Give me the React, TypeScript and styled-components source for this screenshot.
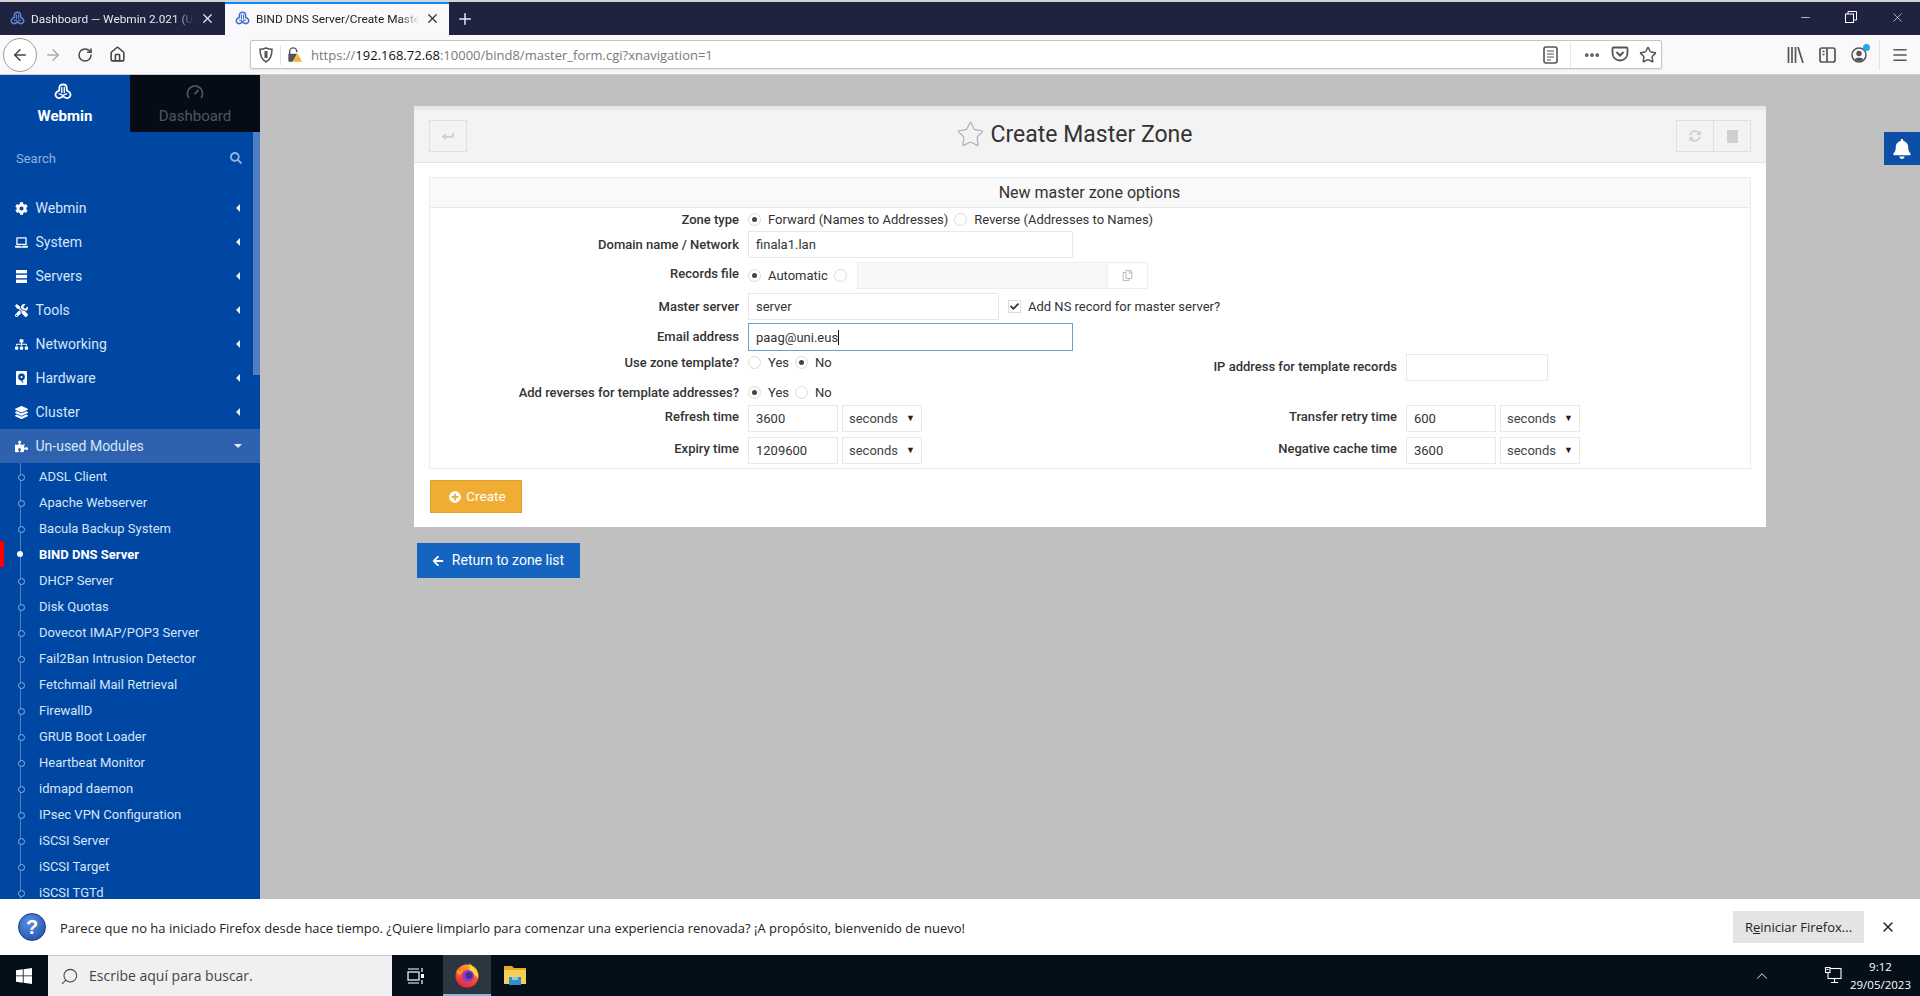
import styled, { createGlobalStyle } from "styled-components";
import {
  ArrowLeft,
  ArrowRight,
  RotateCw,
  Home,
  Plus,
  X,
  Minus,
  Star,
  MoreHorizontal,
  Menu,
  ChevronUp,
  Search,
  Gauge,
} from "lucide-react";
import {
  FaCog,
  FaLaptop,
  FaTools,
  FaSitemap,
  FaLayerGroup,
  FaPuzzlePiece,
  FaSearch,
  FaBell,
  FaPlusCircle,
  FaArrowLeft,
  FaCheck,
  FaSyncAlt,
  FaLevelDownAlt,
  FaRegCopy,
} from "react-icons/fa";

const GlobalStyle = createGlobalStyle`
  html, body {
    margin: 0;
    padding: 0;
    height: 100%;
    overflow: hidden;
  }
  body {
    font-family: Roboto, "Liberation Sans", sans-serif;
    font-size: 13px;
    color: #333;
  }
  * {
    box-sizing: border-box;
  }
`;

function ServerIcon() {
  return (
    <svg width="11" height="13" viewBox="0 0 11 13" fill="currentColor">
      <rect x="0" y="0" width="11" height="3.400" />
      <rect x="0" y="4.800" width="11" height="3.400" />
      <rect x="0" y="9.600" width="11" height="3.400" />
    </svg>
  );
}

function DriveIcon() {
  return (
    <svg width="11" height="14" viewBox="0 0 11 14">
      <rect x="0" y="0" width="11" height="14" rx="1" fill="currentColor" />
      <circle cx="5.500" cy="6" r="3.400" fill="#0047a3" />
      <circle cx="5.500" cy="6" r="1.100" fill="currentColor" />
      <path d="M5 8.500l2 3" stroke="#0047a3" strokeWidth="1.200" />
    </svg>
  );
}

const menu = [
  { label: "Webmin", icon: <FaCog /> },
  { label: "System", icon: <FaLaptop /> },
  { label: "Servers", icon: <ServerIcon /> },
  { label: "Tools", icon: <FaTools /> },
  { label: "Networking", icon: <FaSitemap /> },
  { label: "Hardware", icon: <DriveIcon /> },
  { label: "Cluster", icon: <FaLayerGroup /> },
];

const modules = [
  "ADSL Client",
  "Apache Webserver",
  "Bacula Backup System",
  "BIND DNS Server",
  "DHCP Server",
  "Disk Quotas",
  "Dovecot IMAP/POP3 Server",
  "Fail2Ban Intrusion Detector",
  "Fetchmail Mail Retrieval",
  "FirewallD",
  "GRUB Boot Loader",
  "Heartbeat Monitor",
  "idmapd daemon",
  "IPsec VPN Configuration",
  "iSCSI Server",
  "iSCSI Target",
  "iSCSI TGTd",
];

function WebminLogo({ size, color }: { size: number; color: string }) {
  return (
    <svg width={size} height={size} viewBox="0 0 24 24" fill="none" stroke={color} strokeWidth="2.400" strokeLinecap="round" strokeLinejoin="round">
      <path d="M7 10V6.500C7 3.800 9 2 12 2s5 1.800 5 4.500V10l2.800 1.800c2.400 1.600 2.800 4.400 1.400 6.300-1.500 2-4.200 2.500-6.200 1.200L12 18l-3 1.300c-2 1.300-4.700.8-6.200-1.200-1.400-1.900-1-4.700 1.400-6.300z" />
      <path d="M10.300 6v6.500M13.700 6v6.500M7 14.500c2 0 3.600.8 5 2.500 1.400-1.700 3-2.500 5-2.500" strokeWidth="1.800" />
    </svg>
  );
}

function FirefoxLogo() {
  return (
    <svg width="26" height="27" viewBox="0 0 26 27">
      <defs>
        <linearGradient id="ffOuter" x1="0.7" y1="0" x2="0.3" y2="1">
          <stop offset="0" stopColor="#ffb52e" />
          <stop offset="0.45" stopColor="#ff5a2b" />
          <stop offset="1" stopColor="#e3204f" />
        </linearGradient>
      </defs>
      <circle cx="13" cy="15" r="11.500" fill="url(#ffOuter)" />
      <path d="M15 1c.8 3 5 4.500 7.500 8.500 1.500 2.500 2 5 1.500 7.500L15 9c1-2.500 1-5.500 0-8z" fill="#ffd23a" />
      <circle cx="14" cy="15" r="6" fill="#8a3fbf" />
      <circle cx="15" cy="14.500" r="3.400" fill="#4a2a9c" />
      <path d="M3 8c1 1.500 2 2.200 3 2 1.200-1.500 2.500-2 3.500-1.500-.5 2-2 4.500-4 5.500-2 .5-3-3-2.500-6z" fill="#ff9a2b" />
    </svg>
  );
}

function FolderLogo() {
  return (
    <svg width="22" height="21" viewBox="0 0 22 21">
      <path d="M0 1h8l2 2h12v3H0z" fill="#e8a820" />
      <rect x="0" y="5" width="22" height="14" fill="#f7cf52" />
      <rect x="5" y="12" width="12" height="8" fill="#2f8fc9" />
      <rect x="8" y="12" width="6" height="3" fill="#8cc6ea" />
    </svg>
  );
}

function WindowsLogo() {
  return (
    <svg width="16" height="16" viewBox="0 0 16 16" fill="#fff">
      <path d="M0 2.300 6.800 1.300V7.500H0zM7.600 1.200 16 0V7.500H7.600zM0 8.300H6.800V14.700L0 13.700zM7.600 8.300H16V16L7.600 14.800z" />
    </svg>
  );
}

function Radio({ on }: { on?: boolean }) {
  return <RadioCircle>{on && <RadioDot />}</RadioCircle>;
}

function SelectBox({ width }: { width: number }) {
  return (
    <SelectField style={{ width }}>
      seconds
      <SelectArrow>▼</SelectArrow>
    </SelectField>
  );
}

export default function App() {
  return (
    <Screen>
      <GlobalStyle />
      <TabBar>
        <Tab>
          <WebminLogo size={15} color="#5c86d8" />
          <TabTitle>Dashboard — Webmin 2.021 (U</TabTitle>
          <X size={15} color="#e6e7ee" />
        </Tab>
        <ActiveTab>
          <WebminLogo size={15} color="#3f6fc4" />
          <TabTitle>BIND DNS Server/Create Maste</TabTitle>
          <X size={15} color="#333" />
        </ActiveTab>
        <NewTab>
          <Plus size={18} color="#e6e7ee" />
        </NewTab>
        <WindowControls>
          <WindowButton><Minus size={13} strokeWidth={1.2} /></WindowButton>
          <WindowButton>
            <svg width="12" height="12" viewBox="0 0 12 12" fill="none" stroke="#fff" strokeWidth="1">
              <rect x="0.500" y="3" width="8" height="8.500" />
              <path d="M3 3V.5h8.500V9H8.500" />
            </svg>
          </WindowButton>
          <WindowButton><X size={15} strokeWidth={1} /></WindowButton>
        </WindowControls>
      </TabBar>

      <NavBar>
        <BackCircle><ArrowLeft size={18} strokeWidth={2} /></BackCircle>
        <ToolButton $faded><ArrowRight size={18} strokeWidth={1.8} /></ToolButton>
        <ToolButton><RotateCw size={16} strokeWidth={2.2} /></ToolButton>
        <ToolButton><Home size={17} strokeWidth={2.2} /></ToolButton>
        <UrlBar>
          <UrlIcon>
            <svg width="14" height="16" viewBox="0 0 14 16" fill="none" stroke="#555" strokeWidth="1.500">
              <path d="M7 1c2 1 4 1.300 6 1.300 0 6-1 10-6 12.700C2 12.300 1 8.300 1 2.300 3 2.300 5 2 7 1z" />
              <path d="M7 4v7" strokeWidth="3" />
            </svg>
          </UrlIcon>
          <UrlDivider />
          <UrlIcon>
            <svg width="18" height="18" viewBox="0 0 18 18">
              <path d="M3 8V5a4 4 0 0 1 8 0v1" fill="none" stroke="#555" strokeWidth="1.600" />
              <rect x="1.500" y="7.500" width="10" height="9" rx="1" fill="#555" />
              <path d="M12 7l5.500 10h-11z" fill="#f5b427" stroke="#fff" strokeWidth="0.600" />
            </svg>
          </UrlIcon>
          <UrlText>
            https://<UrlHost>192.168.72.68</UrlHost>:10000/bind8/master_form.cgi?xnavigation=1
          </UrlText>
          <UrlActions>
            <svg width="15" height="18" viewBox="0 0 15 18" fill="none" stroke="#555" strokeWidth="1.600">
              <rect x="1" y="1" width="13" height="16" rx="2" />
              <path d="M4 5h7M4 8h7M4 11h7M4 14h4" strokeWidth="1.200" />
            </svg>
            <UrlActionDivider />
            <MoreHorizontal size={18} color="#555" strokeWidth={3} />
            <svg width="18" height="17" viewBox="0 0 18 17" fill="none" stroke="#555" strokeWidth="1.800">
              <path d="M2.500 1.500h13c.6 0 1 .4 1 1V7a7.500 7.500 0 0 1-15 0V2.500c0-.6.4-1 1-1z" />
              <path d="M5.500 6 9 9.500 12.500 6" strokeWidth="2" />
            </svg>
            <Star size={18} color="#555" strokeWidth={2} />
          </UrlActions>
        </UrlBar>
        <RightTools>
          <ToolButton>
            <svg width="17" height="16" viewBox="0 0 17 16" fill="none" stroke="#555" strokeWidth="1.700">
              <path d="M1.500 0v16M5 0v16M8.500 0v16M11 0l5 16" />
            </svg>
          </ToolButton>
          <ToolButton>
            <svg width="17" height="16" viewBox="0 0 17 16" fill="none" stroke="#555" strokeWidth="1.700">
              <rect x="1" y="1" width="15" height="14" rx="2" />
              <path d="M8 1v14M3.500 4.500h2M3.500 7.500h2" />
            </svg>
          </ToolButton>
          <ToolButton>
            <AccountIcon>
              <svg width="16" height="16" viewBox="0 0 16 16">
                <circle cx="8" cy="8" r="7" fill="none" stroke="#555" strokeWidth="1.500" />
                <circle cx="8" cy="6.500" r="2.700" fill="#555" />
                <path d="M3.500 12.500c1-2.500 8-2.500 9 0-2 2-7 2-9 0z" fill="#555" />
              </svg>
              <AccountDot />
            </AccountIcon>
          </ToolButton>
          <ToolDivider />
          <ToolButton><Menu size={18} color="#555" strokeWidth={2.2} /></ToolButton>
        </RightTools>
      </NavBar>

      <Body>
        <Sidebar>
          <SideTabs>
            <SideTab $active>
              <SideLogo>
                <WebminLogo size={18} color="#fff" />
              </SideLogo>
              <span>Webmin</span>
            </SideTab>
            <SideTab>
              <Gauge size={18} strokeWidth={2.4} />
              <span>Dashboard</span>
            </SideTab>
          </SideTabs>
          <SideScroll />
          <SearchRow>
            <span>Search</span>
            <FaSearch size={12} />
          </SearchRow>
          <MenuList>
            {menu.map((item) => (
              <MenuRow key={item.label}>
                <MenuIcon>{item.icon}</MenuIcon>
                <MenuLabel>{item.label}</MenuLabel>
                <ArrowLeftShape />
              </MenuRow>
            ))}
            <MenuRow $open>
              <MenuIcon><FaPuzzlePiece /></MenuIcon>
              <MenuLabel>Un-used Modules</MenuLabel>
              <ArrowDownShape />
            </MenuRow>
          </MenuList>
          <ModuleList>
            {modules.map((name) => (
              <ModuleRow key={name} $active={name === "BIND DNS Server"}>
                {name}
              </ModuleRow>
            ))}
          </ModuleList>
        </Sidebar>

        <Main>
          <BellTab>
            <FaBell size={20} />
          </BellTab>
          <Card>
            <CardHeader>
              <HeaderButton>
                <FaLevelDownAlt size={12} style={{ transform: "rotate(90deg)" }} />
              </HeaderButton>
              <CardTitle>
                <Star size={29} strokeWidth={1} color="#b0b0b0" />
                <span>Create Master Zone</span>
              </CardTitle>
              <HeaderGroup>
                <HeaderButton><FaSyncAlt size={12} /></HeaderButton>
                <HeaderButton $joined><StopSquare /></HeaderButton>
              </HeaderGroup>
            </CardHeader>
            <CardBody>
              <FormTable>
                <FormTitle>New master zone options</FormTitle>
                <Row $height={23}>
                  <Label>Zone type</Label>
                  <Options $span>
                    <Radio on />
                    <OptionText>Forward (Names to Addresses)</OptionText>
                    <Radio />
                    <OptionText>Reverse (Addresses to Names)</OptionText>
                  </Options>
                </Row>
                <Row $height={27}>
                  <Label $lift={1}>Domain name / Network</Label>
                  <Field $width={325}>finala1.lan</Field>
                </Row>
                <Row $height={27} $top={4}>
                  <Label $lift={5}>Records file</Label>
                  <Options $span>
                    <Radio on />
                    <OptionText>Automatic</OptionText>
                    <Radio />
                    <FileField>
                      <FileButton><FaRegCopy size={11} /></FileButton>
                    </FileField>
                  </Options>
                </Row>
                <Row $height={27} $top={4}>
                  <Label $lift={1}>Master server</Label>
                  <Options $span>
                    <Field $width={251}>server</Field>
                    <CheckBox><FaCheck size={9} /></CheckBox>
                    <OptionText>Add NS record for master server?</OptionText>
                  </Options>
                </Row>
                <Row $height={28} $top={3}>
                  <Label $lift={1}>Email address</Label>
                  <FocusField>
                    paag@uni.eus<Caret />
                  </FocusField>
                </Row>
                <Row $height={28} $top={2}>
                  <Label $lift={10}>Use zone template?</Label>
                  <Options $lift={10}>
                    <Radio />
                    <OptionText>Yes</OptionText>
                    <Radio on />
                    <OptionText>No</OptionText>
                  </Options>
                  <Label $lift={2}>IP address for template records</Label>
                  <Field $width={142} />
                </Row>
                <Row $height={23}>
                  <Label>Add reverses for template addresses?</Label>
                  <Options>
                    <Radio on />
                    <OptionText>Yes</OptionText>
                    <Radio />
                    <OptionText>No</OptionText>
                  </Options>
                </Row>
                <Row $height={28}>
                  <Label $lift={4}>Refresh time</Label>
                  <Options>
                    <Field $width={90}>3600</Field>
                    <SelectBox width={80} />
                  </Options>
                  <Label $lift={4}>Transfer retry time</Label>
                  <Options>
                    <Field $width={90}>600</Field>
                    <SelectBox width={80} />
                  </Options>
                </Row>
                <Row $height={28} $top={4}>
                  <Label $lift={4}>Expiry time</Label>
                  <Options>
                    <Field $width={90}>1209600</Field>
                    <SelectBox width={80} />
                  </Options>
                  <Label $lift={4}>Negative cache time</Label>
                  <Options>
                    <Field $width={90}>3600</Field>
                    <SelectBox width={80} />
                  </Options>
                </Row>
              </FormTable>
              <CreateButton>
                <FaPlusCircle size={12} />
                <CreateLabel>Create</CreateLabel>
              </CreateButton>
            </CardBody>
          </Card>
          <ReturnButton>
            <FaArrowLeft size={12} />
            <ReturnLabel>Return to zone list</ReturnLabel>
          </ReturnButton>
        </Main>
      </Body>

      <Notice>
        <NoticeIcon>?</NoticeIcon>
        <NoticeText>
          Parece que no ha iniciado Firefox desde hace tiempo. ¿Quiere limpiarlo para comenzar una experiencia renovada? ¡A propósito, bienvenido de nuevo!
        </NoticeText>
        <NoticeButton>
          R<u>e</u>iniciar Firefox...
        </NoticeButton>
        <NoticeClose><X size={16} strokeWidth={2.2} /></NoticeClose>
      </Notice>

      <Taskbar>
        <StartButton><WindowsLogo /></StartButton>
        <TaskSearch>
          <Search size={19} strokeWidth={1.3} style={{ transform: "scaleX(-1)" }} />
          <TaskSearchText>Escribe aquí para buscar.</TaskSearchText>
        </TaskSearch>
        <TaskIcon>
          <svg width="18" height="18" viewBox="0 0 18 18" fill="none" stroke="#fff" strokeWidth="1.200">
            <rect x="1" y="5" width="11" height="8" />
            <path d="M1 2h11M1 16h11M15 1v4M15 13v4" />
            <rect x="14" y="7" width="3" height="4" fill="#fff" stroke="none" />
          </svg>
        </TaskIcon>
        <TaskIcon $running><FirefoxLogo /></TaskIcon>
        <TaskIcon><FolderLogo /></TaskIcon>
        <Tray>
          <ChevronUp size={18} strokeWidth={1.2} />
          <TrayNetwork>
            <svg width="17" height="17" viewBox="0 0 17 17" fill="none" stroke="#fff" strokeWidth="1.100">
              <rect x="3" y="1.500" width="13" height="10" />
              <rect x="0.500" y="0.500" width="4.500" height="5" fill="#040f19" />
              <path d="M9.500 11.500V15M6 15.500h7" />
              <path d="M1.500 2.500h2" />
            </svg>
          </TrayNetwork>
          <Clock>
            <span>9:12</span>
            <span>29/05/2023</span>
          </Clock>
        </Tray>
      </Taskbar>
    </Screen>
  );
}

const Screen = styled.div`
  width: 100%;
  height: 100vh;
  display: flex;
  flex-direction: column;
  overflow: hidden;
`;

const TabBar = styled.div`
  height: 35px;
  flex: none;
  display: flex;
  background: #1f2340;
  border-top: 2px solid #d4d4d4;
  font-family: "Open Sans", "Liberation Sans", sans-serif;
  font-size: 12px;
`;

const Tab = styled.div`
  width: 225px;
  display: flex;
  align-items: center;
  gap: 6px;
  padding: 0 10px;
  color: #e6e7ee;
`;

const ActiveTab = styled(Tab)`
  width: 224px;
  background: #f9f9fb;
  color: #222;
  border-top: 2px solid #0a84ff;
  padding: 0 9px 2px 10px;
`;

const TabTitle = styled.span`
  flex: 1;
  min-width: 0;
  white-space: nowrap;
  font-family: Roboto, "Liberation Sans", sans-serif;
  font-size: 11.800px;
  -webkit-mask-image: linear-gradient(to right, #000 88%, transparent);
  mask-image: linear-gradient(to right, #000 88%, transparent);
`;

const NewTab = styled.div`
  width: 32px;
  display: flex;
  align-items: center;
  justify-content: center;
`;

const WindowControls = styled.div`
  margin-left: auto;
  display: flex;
  color: #fff;
`;

const WindowButton = styled.div`
  width: 46px;
  display: flex;
  align-items: center;
  justify-content: center;
  padding-bottom: 3px;
`;

const NavBar = styled.div`
  height: 40px;
  flex: none;
  display: flex;
  align-items: center;
  background: #f9f9fb;
  border-bottom: 1px solid #ccc;
  padding-left: 3px;
`;

const BackCircle = styled.div`
  width: 34px;
  height: 34px;
  border-radius: 50%;
  border: 1px solid #9a9a9a;
  background: #fff;
  color: #444;
  display: flex;
  align-items: center;
  justify-content: center;
  flex: none;
`;

const ToolButton = styled.div<{ $faded?: boolean }>`
  width: 32px;
  height: 32px;
  flex: none;
  display: flex;
  align-items: center;
  justify-content: center;
  color: ${(p) => (p.$faded ? "#aaa" : "#444")};
`;

const UrlBar = styled.div`
  width: 1412px;
  height: 29px;
  margin-left: 117px;
  flex: none;
  display: flex;
  align-items: center;
  background: #fff;
  border: 1px solid #c4c4c4;
  border-radius: 2px;
  box-shadow: 0 1px 2px rgba(0, 0, 0, 0.08);
  padding-left: 7px;
  font-family: "Open Sans", "Liberation Sans", sans-serif;
  font-size: 13px;
  color: #7a7a7a;
`;

const UrlIcon = styled.div`
  display: flex;
  align-items: center;
  justify-content: center;
  width: 16px;
  flex: none;
`;

const UrlDivider = styled.div`
  width: 1px;
  height: 20px;
  background: #e2e2e2;
  margin: 0 6px 0 6px;
`;

const UrlText = styled.div`
  margin-left: 8px;
  white-space: nowrap;
`;

const UrlHost = styled.span`
  color: #111;
`;

const UrlActions = styled.div`
  margin-left: auto;
  display: flex;
  align-items: center;
  gap: 10px;
  padding-right: 4px;
`;

const UrlActionDivider = styled.div`
  width: 1px;
  height: 26px;
  background: #e6e6e6;
  margin: 0 2px;
`;

const RightTools = styled.div`
  margin-left: 117px;
  display: flex;
  align-items: center;
`;

const ToolDivider = styled.div`
  width: 1px;
  height: 30px;
  background: #e2e2e2;
  margin: 0 4px;
`;

const AccountIcon = styled.div`
  position: relative;
  display: flex;
`;

const AccountDot = styled.div`
  position: absolute;
  top: -3px;
  right: -3px;
  width: 7px;
  height: 7px;
  border-radius: 50%;
  background: #20a8e8;
`;

const Body = styled.div`
  flex: 1;
  min-height: 0;
  display: flex;
`;

const Sidebar = styled.aside`
  position: relative;
  width: 260px;
  flex: none;
  background: #0047a3;
  color: #d7e5f8;
  overflow: hidden;
`;

const SideTabs = styled.div`
  display: flex;
  height: 57px;
`;

const SideTab = styled.div<{ $active?: boolean }>`
  flex: 1;
  display: flex;
  flex-direction: column;
  align-items: center;
  gap: 6px;
  padding-top: 8px;
  font-size: 15px;
  font-weight: ${(p) => (p.$active ? 700 : 400)};
  background: ${(p) => (p.$active ? "#0047a3" : "#060c16")};
  color: ${(p) => (p.$active ? "#fff" : "#50555e")};
`;

const SideLogo = styled.div`
  display: flex;
  margin-right: 5px;
`;

const SideScroll = styled.div`
  position: absolute;
  right: 0;
  top: 57px;
  width: 7px;
  height: 243px;
  background: #4f7fc0;
`;

const SearchRow = styled.div`
  height: 52px;
  display: flex;
  align-items: center;
  justify-content: space-between;
  padding: 0 18px 0 16px;
  font-size: 13px;
  color: #8fb2e0;
`;

const MenuList = styled.div`
  margin-top: 7px;
`;

const MenuRow = styled.div<{ $open?: boolean }>`
  height: 34px;
  display: flex;
  align-items: center;
  padding: 0 20px 0 14px;
  background: ${(p) => (p.$open ? "#2f62ae" : "transparent")};
  font-size: 14px;
`;

const MenuIcon = styled.div`
  width: 14px;
  display: flex;
  justify-content: center;
  font-size: 13px;
  color: #fff;
`;

const MenuLabel = styled.div`
  margin-left: 7.500px;
  flex: 1;
`;

const ArrowLeftShape = styled.div`
  width: 0;
  height: 0;
  border-top: 4px solid transparent;
  border-bottom: 4px solid transparent;
  border-right: 4px solid #e4edf9;
`;

const ArrowDownShape = styled.div`
  width: 0;
  height: 0;
  margin-right: -2px;
  border-left: 4px solid transparent;
  border-right: 4px solid transparent;
  border-top: 4px solid #e4edf9;
`;

const ModuleList = styled.div`
  position: relative;
  &::before {
    content: "";
    position: absolute;
    left: 20px;
    top: 0;
    bottom: 0;
    width: 1px;
    background: #4f80c2;
  }
`;

const ModuleRow = styled.div<{ $active?: boolean }>`
  position: relative;
  height: 26px;
  display: flex;
  align-items: center;
  padding-left: 39px;
  font-size: 13px;
  white-space: nowrap;
  font-weight: ${(p) => (p.$active ? 700 : 400)};
  color: ${(p) => (p.$active ? "#fff" : "#d7e5f8")};
  &::before {
    content: "";
    position: absolute;
    left: ${(p) => (p.$active ? "17px" : "18px")};
    top: ${(p) => (p.$active ? "10px" : "11px")};
    width: ${(p) => (p.$active ? "6px" : "5px")};
    height: ${(p) => (p.$active ? "6px" : "5px")};
    border-radius: 50%;
    background: ${(p) => (p.$active ? "#fff" : "#0047a3")};
    border: ${(p) => (p.$active ? "none" : "1px solid #8fb2e0")};
  }
  &::after {
    content: "";
    display: ${(p) => (p.$active ? "block" : "none")};
    position: absolute;
    left: 0;
    top: 0;
    width: 4px;
    height: 26px;
    background: #f00;
  }
`;

const Main = styled.main`
  position: relative;
  flex: 1;
  min-width: 0;
  background: #c0c0c0;
  padding: 31px 0 0 154px;
`;

const BellTab = styled.div`
  position: absolute;
  top: 57px;
  right: 0;
  width: 36px;
  height: 33px;
  background: #0d4ea6;
  color: #fff;
  display: flex;
  align-items: center;
  justify-content: center;
`;

const Card = styled.section`
  width: 1352px;
  background: #fff;
`;

const CardHeader = styled.header`
  height: 57px;
  display: flex;
  align-items: center;
  justify-content: space-between;
  padding: 0 15px;
  background: #f3f3f3;
  border-top: 4px solid #e8e8e8;
  border-bottom: 1px solid #e4e4e4;
`;

const HeaderButton = styled.div<{ $joined?: boolean }>`
  width: 38px;
  height: 32px;
  display: flex;
  align-items: center;
  justify-content: center;
  border: 1px solid #e0e0e0;
  margin-left: ${(p) => (p.$joined ? "-1px" : "0")};
  color: #cfcfcf;
`;

const HeaderGroup = styled.div`
  display: flex;
`;

const StopSquare = styled.div`
  width: 11px;
  height: 13px;
  background: #cfcfcf;
`;

const CardTitle = styled.h1`
  margin: 0 0 3px 5px;
  display: flex;
  align-items: center;
  gap: 6px;
  font-size: 23px;
  font-weight: 400;
  color: #333;
`;

const CardBody = styled.div`
  padding: 14px 15px 14px;
`;

const FormTable = styled.div`
  border: 1px solid #ececec;
  height: 292px;
`;

const FormTitle = styled.div`
  height: 30px;
  display: flex;
  align-items: center;
  justify-content: center;
  padding-right: 1px;
  font-size: 16px;
  color: #333;
  background: #f9f9f9;
  border-bottom: 1px solid #e8e8e8;
`;

const Row = styled.div<{ $height: number; $top?: number }>`
  display: grid;
  grid-template-columns: 309px 340px 300px 1fr;
  column-gap: 9px;
  align-items: center;
  height: ${(p) => p.$height}px;
  margin-top: ${(p) => p.$top ?? 0}px;
`;

const Label = styled.div<{ $lift?: number }>`
  text-align: right;
  font-weight: 500;
  color: #333;
  white-space: nowrap;
  margin-bottom: ${(p) => p.$lift ?? 0}px;
`;

const Options = styled.div<{ $span?: boolean; $lift?: number }>`
  display: flex;
  align-items: center;
  height: 100%;
  grid-column: ${(p) => (p.$span ? "2 / -1" : "auto")};
  padding-bottom: ${(p) => p.$lift ?? 0}px;
`;

const RadioCircle = styled.span`
  width: 13px;
  height: 13px;
  flex: none;
  border-radius: 50%;
  border: 1px solid #dcdcdc;
  background: #fff;
  display: flex;
  align-items: center;
  justify-content: center;
`;

const RadioDot = styled.span`
  width: 5px;
  height: 5px;
  border-radius: 50%;
  background: #444;
`;

const OptionText = styled.span`
  margin: 0 6px 0 7px;
  color: #333;
  white-space: nowrap;
`;

const Field = styled.div<{ $width?: number }>`
  width: ${(p) => p.$width ?? 325}px;
  height: 27px;
  flex: none;
  display: flex;
  align-items: center;
  padding: 0 7px;
  border: 1px solid #e8e8e8;
  background: #fff;
  color: #333;
`;

const FocusField = styled(Field)`
  height: 28px;
  border-color: #66a3d2;
`;

const Caret = styled.span`
  width: 1px;
  height: 15px;
  background: #111;
`;

const FileField = styled.div`
  width: 291px;
  height: 27px;
  margin-left: 10px;
  display: flex;
  justify-content: flex-end;
  background: #f8f8f8;
  border: 1px solid #eeeeee;
`;

const FileButton = styled.div`
  width: 40px;
  display: flex;
  align-items: center;
  justify-content: center;
  color: #bbb;
  background: #fff;
  border-left: 1px solid #eee;
`;

const CheckBox = styled.span`
  width: 13px;
  height: 13px;
  margin-left: 9px;
  flex: none;
  border: 1px solid #dcdcdc;
  display: flex;
  align-items: center;
  justify-content: center;
  color: #333;
`;

const SelectField = styled.div`
  height: 27px;
  margin-left: 4px;
  flex: none;
  display: flex;
  align-items: center;
  justify-content: space-between;
  padding: 0 6px;
  border: 1px solid #e8e8e8;
  color: #444;
`;

const SelectArrow = styled.span`
  font-size: 9px;
  color: #222;
`;

const CreateButton = styled.button`
  margin: 11px 0 0 1px;
  width: 92px;
  height: 33px;
  display: flex;
  align-items: center;
  justify-content: center;
  gap: 5px;
  padding-right: 3px;
  border: 1px solid #e0a030;
  background: #f0ad33;
  color: #fff;
  font: 400 13.500px Roboto, "Liberation Sans", sans-serif;
`;

const CreateLabel = styled.span`
  margin-bottom: 1px;
`;

const ReturnButton = styled.button`
  margin: 16px 0 0 3px;
  width: 163px;
  height: 35px;
  display: flex;
  align-items: center;
  justify-content: center;
  gap: 8px;
  padding-right: 7px;
  border: none;
  background: #1565c0;
  color: #fff;
  font: 400 14px Roboto, "Liberation Sans", sans-serif;
`;

const ReturnLabel = styled.span`
  margin-bottom: 1px;
`;

const Notice = styled.div`
  height: 56px;
  flex: none;
  display: flex;
  align-items: center;
  background: #fff;
  padding: 0 24px 0 18px;
  font-family: "Open Sans", "Liberation Sans", sans-serif;
  font-size: 13px;
  color: #222;
`;

const NoticeIcon = styled.div`
  width: 28px;
  height: 28px;
  flex: none;
  border-radius: 50%;
  background: radial-gradient(circle at 40% 30%, #5b8fe0, #1a4aa8);
  border: 1px solid #16387f;
  color: #fff;
  display: flex;
  align-items: center;
  justify-content: center;
  font: 700 20px "Liberation Sans", sans-serif;
`;

const NoticeText = styled.div`
  margin-left: 14px;
  padding-top: 2px;
  flex: 1;
  white-space: nowrap;
`;

const NoticeButton = styled.div`
  width: 131px;
  height: 32px;
  display: flex;
  align-items: center;
  justify-content: center;
  background: #e4e4e4;
`;

const NoticeClose = styled.div`
  width: 16px;
  margin-left: 16px;
  display: flex;
`;

const Taskbar = styled.footer`
  height: 41px;
  flex: none;
  display: flex;
  align-items: stretch;
  background: #040f19;
  color: #fff;
  font-family: "Open Sans", "Liberation Sans", sans-serif;
`;

const StartButton = styled.div`
  width: 48px;
  display: flex;
  align-items: center;
  justify-content: center;
`;

const TaskSearch = styled.div`
  width: 344px;
  display: flex;
  align-items: center;
  gap: 10px;
  padding-left: 12px;
  background: #f0f0f0;
  border-top: 1px solid #c8c8c8;
  color: #444;
  font-size: 14px;
`;

const TaskSearchText = styled.span`
  margin-bottom: 2px;
`;

const TaskIcon = styled.div<{ $running?: boolean }>`
  width: 48px;
  display: flex;
  align-items: center;
  justify-content: center;
  margin-left: ${(p) => (p.$running ? "3px" : "0")};
  background: ${(p) => (p.$running ? "#2c3641" : "transparent")};
  border-bottom: ${(p) => (p.$running ? "2px solid #8ab4d8" : "none")};
`;

const Tray = styled.div`
  margin-left: auto;
  display: flex;
  align-items: center;
  padding-right: 9px;
`;

const TrayNetwork = styled.div`
  margin: 0 8px 0 54px;
  display: flex;
`;

const Clock = styled.div`
  display: flex;
  flex-direction: column;
  align-items: center;
  gap: 3px;
  margin-bottom: 1px;
  font-size: 11.500px;
  line-height: 15px;
`;
